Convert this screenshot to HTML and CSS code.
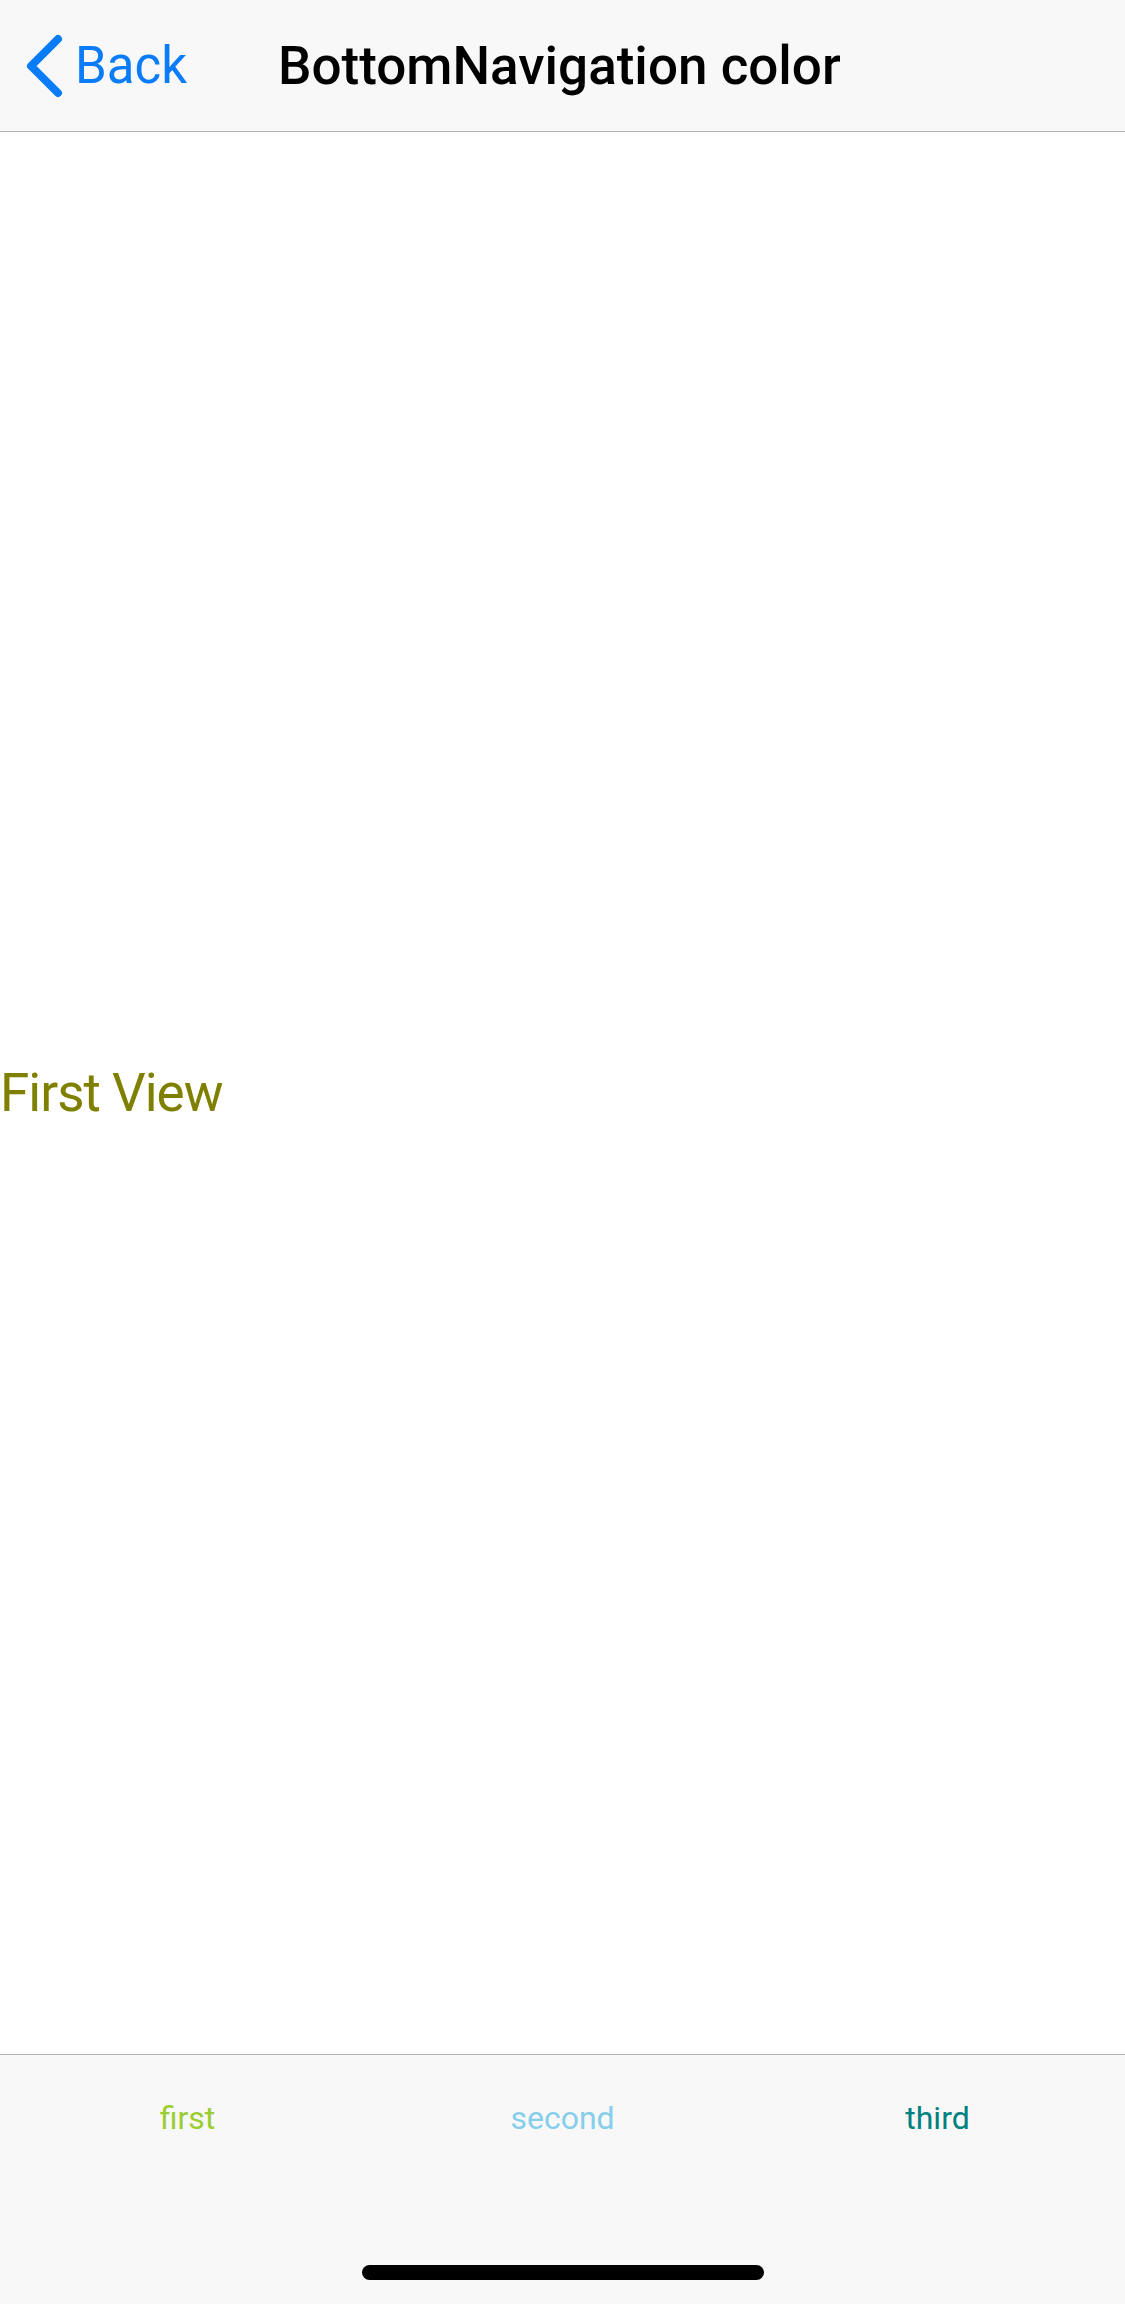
FILE: index.html
```html
<!DOCTYPE html>
<html>
<head>
<meta charset="utf-8">
<link rel="stylesheet" href="styles.css">
</head>
<body>
<div class="screen">
  <header class="navbar">
    <div class="back">
      <svg class="chevron" width="50" height="70" viewBox="0 0 50 70">
        <polyline points="38,8 11,35 38,62" fill="none" stroke="#0a7cf8" stroke-width="8" stroke-linecap="round" stroke-linejoin="round"/>
      </svg>
      <span class="back-label">Back</span>
    </div>
    <div class="title">BottomNavigation color</div>
  </header>
  <main class="content">
    <div class="view-label">First View</div>
  </main>
  <footer class="tabbar">
    <div class="tabs">
      <div class="tab tab-first">first</div>
      <div class="tab tab-second">second</div>
      <div class="tab tab-third">third</div>
    </div>
    <div class="home-indicator"></div>
  </footer>
</div>
</body>
</html>
```

FILE: styles.css
```css
html, body {
  margin: 0;
  padding: 0;
  background: #ffffff;
}
.screen {
  width: 1125px;
  height: 2304px;
  display: flex;
  flex-direction: column;
  font-family: Roboto, "Liberation Sans", sans-serif;
}
.navbar {
  height: 132px;
  box-sizing: border-box;
  border-bottom: 1px solid #b2b2b2;
  background: #f8f8f8;
  display: flex;
  align-items: center;
  padding-left: 20px;
}
.back {
  display: flex;
  align-items: center;
}
.chevron {
  display: block;
  margin-right: 5px;
}
.back-label {
  font-size: 51px;
  color: #0a7cf8;
}
.title {
  margin-left: 91px;
  font-size: 53px;
  font-weight: 500;
  color: #000;
}
.content {
  flex: 1;
  display: flex;
  align-items: center;
}
.view-label {
  font-size: 53px;
  letter-spacing: -1px;
  color: #808000;
}
.tabbar {
  height: 250px;
  box-sizing: border-box;
  border-top: 1px solid #b2b2b2;
  background: #f8f8f8;
  display: flex;
  flex-direction: column;
}
.tabs {
  display: flex;
  padding-top: 43px;
}
.tab {
  flex: 1;
  text-align: center;
  font-size: 32px;
  line-height: 40px;
}
.tab-first { color: #9acd32; }
.tab-second { color: #87ceeb; }
.tab-third { color: #008080; }
.home-indicator {
  width: 402px;
  height: 15px;
  border-radius: 8px;
  background: #000;
  margin: auto auto 24px auto;
}
```
